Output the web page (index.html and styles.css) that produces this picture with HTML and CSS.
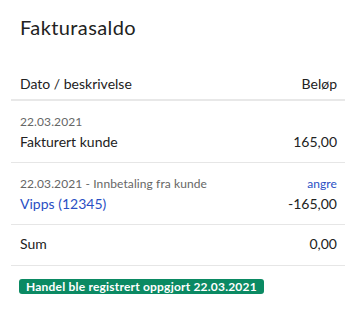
FILE: index.html
```html
<!DOCTYPE html>
<html>
<head>
<meta charset="utf-8">
<title>Fakturasaldo</title>
<link rel="stylesheet" href="styles.css">
</head>
<body>
<div class="panel">
	<h2 class="title">Fakturasaldo</h2>
	<table class="saldo">
		<thead>
			<tr><th class="desc">Dato / beskrivelse</th><th class="amt">Beløp</th></tr>
		</thead>
		<tbody>
			<tr>
				<td class="desc">
					<div class="meta">22.03.2021</div>
					<div>Fakturert kunde</div>
				</td>
				<td class="amt"><div class="meta">&nbsp;</div><div>165,00</div></td>
			</tr>
			<tr>
				<td class="desc">
					<div class="meta">22.03.2021 - Innbetaling fra kunde</div>
					<div><a href="#">Vipps (12345)</a></div>
				</td>
				<td class="amt"><div class="meta"><a href="#">angre</a></div><div>-165,00</div></td>
			</tr>
			<tr class="sum">
				<td class="desc">Sum</td>
				<td class="amt">0,00</td>
			</tr>
		</tbody>
	</table>
	<span class="badge">Handel ble registrert oppgjort 22.03.2021</span>
</div>
</body>
</html>
```

FILE: styles.css
```css
body {
	margin: 0;
	background: #fff;
	font-family: Lato, "Liberation Sans", sans-serif;
	color: #222;
}
.panel {
	padding: 15px 10px 0 11px;
}
.title {
	margin: 0 0 27px 9px;
	font-size: 20px;
	font-weight: 400;
	line-height: 24px;
	letter-spacing: 0.4px;
	color: #222;
}
.saldo {
	width: 334px;
	border-collapse: collapse;
	font-size: 14px;
}
.saldo th {
	font-weight: 400;
	padding: 8px 8px 5px 9px;
	line-height: 20px;
	border-bottom: 2px solid #e8e8e8;
}
.saldo td {
	padding: 10px 8px 10px 9px;
	line-height: 20px;
	border-bottom: 1px solid #e6e6e6;
	vertical-align: top;
}
.desc {
	text-align: left;
}
.amt {
	text-align: right;
}
.meta {
	font-size: 12px;
	line-height: 21px;
	color: #666;
	letter-spacing: 0.1px;
}
.meta a {
	font-size: 12px;
}
a {
	color: #2a4fc4;
	text-decoration: none;
}
.sum td {
	padding: 9px 8px 11px 9px;
}
.badge {
	display: inline-block;
	margin: 13px 0 0 8px;
	padding: 1px 7px 0;
	background: #0b8a63;
	color: #fff;
	font-size: 12px;
	font-weight: 700;
	line-height: 14px;
	letter-spacing: 0.2px;
	border-radius: 3px;
}
```
